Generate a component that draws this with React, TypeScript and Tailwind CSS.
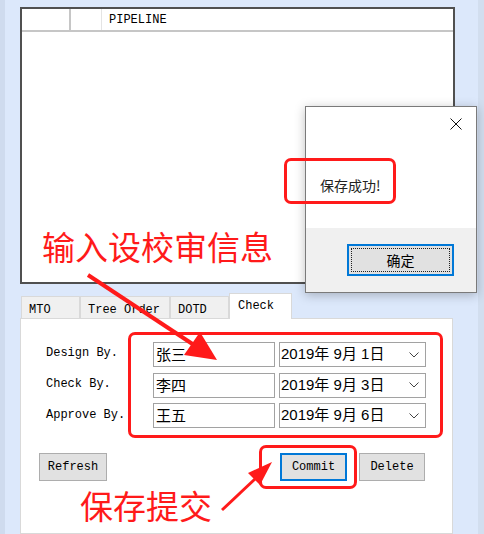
const rows = [
  { label: "Design By.", name: "张三", date: "2019年 9月 1日" },
  { label: "Check By.", name: "李四", date: "2019年 9月 3日" },
  { label: "Approve By.", name: "王五", date: "2019年 9月 6日" },
];

const tabs = [
  { name: "MTO", w: "w-[59px]", active: false },
  { name: "Tree Order", w: "w-[90px]", active: false },
  { name: "DOTD", w: "w-[59px]", active: false },
  { name: "Check", w: "w-[63px]", active: true },
];

function WinButton({ label, w, focused }: { label: string; w: string; focused?: boolean }) {
  return (
    <div
      className={`${w} h-[28px] bg-[#e1e1e1] flex items-center justify-center ${
        focused ? "border-2 border-[#0078d7]" : "border border-[#adadad]"
      }`}
    >
      {label}
    </div>
  );
}

function Arrows() {
  return (
    <svg className="absolute inset-0 pointer-events-none" width="484" height="534">
      <line x1="88" y1="275" x2="194" y2="345" stroke="#ff1a1a" strokeWidth="4" />
      <polygon points="217,360 184,355 200,332" fill="#ff1a1a" />
      <line x1="222" y1="510" x2="256" y2="478" stroke="#ff1a1a" strokeWidth="3" />
      <polygon points="272,462 260,485 248,473" fill="#ff1a1a" />
    </svg>
  );
}

export default function App() {
  return (
    <div className="relative w-[484px] h-[534px] overflow-hidden bg-[#dce8fb] flex font-['Liberation_Mono',monospace] text-[12px] text-black">
      <div className="w-[5px] bg-[#cfdbee]" />
      <div className="w-[15px]" />

      {/* main column */}
      <div className="w-[435px] flex flex-col pt-[7px]">
        <div className="h-[277px] border-2 border-[#505050] bg-white">
          <div className="flex h-[23px] border-b-2 border-[#c6c6c6]">
            <div className="w-[49px] border-r-2 border-[#c6c6c6]" />
            <div className="w-[31px] border-r border-[#e4e4e4]" />
            <div className="flex-1 pl-[7px] flex items-center">PIPELINE</div>
          </div>
        </div>

        <div className="mt-[8px] flex items-end h-[26px] pl-[1px]">
          {tabs.map((t) =>
            t.active ? (
              <div
                key={t.name}
                className={`${t.w} h-[26px] bg-white border border-b-0 border-[#d9d9d9] pl-[8px] pt-[3px] -mb-px relative z-10`}
              >
                {t.name}
              </div>
            ) : (
              <div
                key={t.name}
                className={`${t.w} h-[22px] bg-[#f0f0f0] border border-b-0 border-[#d9d9d9] pl-[7px] pt-[4px]`}
              >
                {t.name}
              </div>
            )
          )}
        </div>

        <div className="flex-1 w-[433px] bg-white border border-[#d9d9d9] pt-[13px]">
          <div className="flex">
            <div className="w-[107px] pl-[25px] pt-[8px] flex flex-col gap-[6px]">
              {rows.map((r) => (
                <div key={r.label} className="h-[25px] flex items-center">
                  {r.label}
                </div>
              ))}
            </div>
            <div className="w-[315px] border-[3px] border-[#ff1a1a] rounded-[7px] pt-[7px] pb-[7px] pl-[22px] flex flex-col gap-[5.5px]">
              {rows.map((r) => (
                <div key={r.name} className="flex gap-[4px]">
                  <div className="w-[122px] h-[25px] border border-[#a2a2a2] pl-[2px] flex items-center text-[15px] font-['Noto_Sans_CJK_SC',sans-serif]">
                    {r.name}
                  </div>
                  <div className="w-[147px] h-[25px] border border-[#a2a2a2] pl-[1px] pr-[6px] flex items-center justify-between text-[15px] font-['Liberation_Sans','Noto_Sans_CJK_SC',sans-serif]">
                    <span>{r.date}</span>
                    <svg width="10" height="6" viewBox="0 0 10 6">
                      <polyline points="0.5,0.5 5,5 9.5,0.5" fill="none" stroke="#444" strokeWidth="1" />
                    </svg>
                  </div>
                </div>
              ))}
            </div>
          </div>

          <div className="mt-[7px] flex items-center h-[44px]">
            <div className="ml-[18px]">
              <WinButton label="Refresh" w="w-[68px]" />
            </div>
            <div className="ml-[152px] w-[98px] h-[44px] border-[3px] border-[#ff1a1a] rounded-[7px] flex items-center pl-[18px]">
              <WinButton label="Commit" w="w-[67px]" focused />
            </div>
            <div className="ml-[2px]">
              <WinButton label="Delete" w="w-[66px]" />
            </div>
          </div>
        </div>
      </div>

      <div className="w-[23px]" />
      <div className="flex-1 bg-[#d2deef]" />

      {/* message box */}
      <div className="absolute left-[305px] top-[106px] w-[172px] h-[187px] bg-white border border-[#7a7a7a] shadow-[0_2px_10px_rgba(0,0,0,0.25)] flex flex-col font-['Noto_Sans_CJK_SC',sans-serif] text-[14px]">
        <div className="h-[121px] relative">
          <svg className="absolute left-[144px] top-[11px]" width="12" height="12" viewBox="0 0 12 12">
            <line x1="0.5" y1="0.5" x2="11.5" y2="11.5" stroke="#111" strokeWidth="1" />
            <line x1="11.5" y1="0.5" x2="0.5" y2="11.5" stroke="#111" strokeWidth="1" />
          </svg>
          <div className="pl-[14px] pt-[69px] leading-[18px] text-[#222]">保存成功!</div>
        </div>
        <div className="flex-1 bg-[#f0f0f0] pl-[41px] pt-[16px]">
          <div className="relative w-[107px] h-[32px] border-2 border-[#0078d7] bg-[#e1e1e1] flex items-center justify-center">
            <div className="absolute inset-[2px] border border-dotted border-[#222]" />
            确定
          </div>
        </div>
      </div>

      {/* annotations */}
      <div className="absolute left-[284px] top-[158px] w-[112px] h-[46px] border-[3px] border-[#ff1a1a] rounded-[7px]" />
      <div className="absolute left-[42px] top-[230px] text-[33px] leading-none text-[#ff1a1a] font-['Noto_Sans_CJK_SC',sans-serif]">
        输入设校审信息
      </div>
      <div className="absolute left-[80px] top-[489px] text-[33px] leading-none text-[#ff1a1a] font-['Noto_Sans_CJK_SC',sans-serif]">
        保存提交
      </div>
      <Arrows />
    </div>
  );
}
